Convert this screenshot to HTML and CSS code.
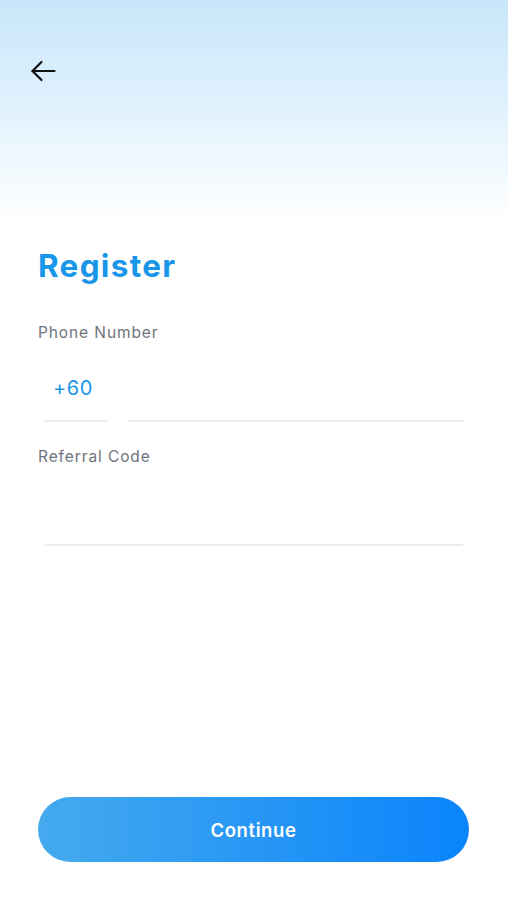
FILE: index.html
```html
<!DOCTYPE html>
<html lang="en">
<head>
    <meta charset="UTF-8">
    <meta name="viewport" content="width=device-width, initial-scale=1.0">
    <title>Register</title>
    <link rel="stylesheet" href="styles.css">
</head>
<body>
    <div class="screen">
        <div class="topbar">
            <button class="back-button" aria-label="Back">
                <svg width="26" height="22" viewBox="0 0 26 22" fill="none" stroke="#111" stroke-width="2.2" stroke-linecap="round" stroke-linejoin="round">
                    <path d="M24.5 11H2.5"/>
                    <path d="M11.5 2L2.5 11L11.5 20"/>
                </svg>
            </button>
        </div>

        <h1 class="title">Register</h1>

        <form class="form" onsubmit="return false">
            <div class="form-group">
                <label for="phone">Phone Number</label>
                <div class="phone-row">
                    <div class="country-code">+60</div>
                    <input type="tel" id="phone" name="phone">
                </div>
            </div>

            <div class="form-group">
                <label for="referral">Referral Code</label>
                <div class="field">
                    <input type="text" id="referral" name="referral">
                </div>
            </div>
        </form>

        <button type="submit" class="submit-btn">Continue</button>
    </div>
</body>
</html>
```

FILE: styles.css
```css
* {
    margin: 0;
    padding: 0;
    box-sizing: border-box;
}

body {
    font-family: 'Inter', 'Open Sans', sans-serif;
    background: #fff;
    min-height: 100vh;
}

.screen {
    min-height: 900px;
    display: flex;
    flex-direction: column;
    padding: 0 39px 38px 38px;
    background: linear-gradient(to bottom, #c8e6fa 0, #dcf0fd 90px, #f1f9fe 170px, #fff 225px);
}

.topbar {
    padding-top: 60px;
    height: 82px;
}

.back-button {
    display: block;
    width: 26px;
    height: 22px;
    margin-left: -8px;
    background: none;
    border: none;
    cursor: pointer;
}

.back-button svg {
    display: block;
}

.title {
    margin-top: 166px;
    color: #1a96e9;
    font-size: 31.5px;
    font-weight: 700;
    line-height: 36px;
    letter-spacing: 1.3px;
}

.form {
    margin-top: 39px;
    flex: 1;
}

.form-group label {
    display: block;
    color: #6f737c;
    font-size: 15.5px;
    line-height: 20px;
    letter-spacing: 0.9px;
}

.phone-row {
    display: flex;
    gap: 20px;
    margin: 12px 6px 0;
}

.country-code {
    width: 63px;
    height: 67px;
    padding: 12px 0 0 9px;
    color: #1a96e9;
    font-size: 20px;
    line-height: 42px;
    letter-spacing: 0.5px;
    border-bottom: 2px solid #eceef1;
}

.phone-row input,
.field input {
    flex: 1;
    width: 100%;
    height: 67px;
    border: none;
    border-bottom: 2px solid #eceef1;
    background: transparent;
    font-size: 18px;
    outline: none;
}

.form-group + .form-group {
    margin-top: 25px;
}

.field {
    display: flex;
    margin: 12px 6px 0;
}

.submit-btn {
    width: 100%;
    height: 65px;
    border: none;
    border-radius: 33px;
    background: linear-gradient(to right, #45aaee, #0a84fc);
    color: #fff;
    font-family: inherit;
    font-size: 18.5px;
    font-weight: 600;
    letter-spacing: 0.6px;
    cursor: pointer;
}
```
